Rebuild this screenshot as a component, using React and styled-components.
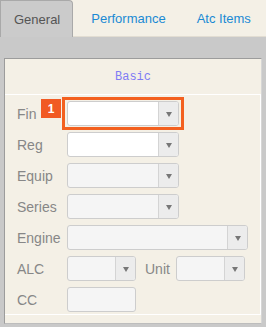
import React from 'react';
import styled, { createGlobalStyle } from 'styled-components';

const GlobalStyle = createGlobalStyle`
  html, body {
    margin: 0;
    padding: 0;
    background: #c9c9c9;
    font-family: 'Liberation Sans', Arial, sans-serif;
  }
`;

const TabBar = styled.div`
  display: flex;
  align-items: flex-end;
  height: 37px;
  background: #f4f0e6;
  box-sizing: border-box;
  border-bottom: 1px solid #e2ddd2;
`;

const Tab = styled.div`
  flex-shrink: 0;
  white-space: nowrap;
  box-sizing: border-box;
  padding: 0 12px 0 13px;
  margin-right: 4px;
  display: flex;
  align-items: center;
  font-size: 13px;
  color: ${(p) => (p.active ? '#555' : '#1a8ad4')};
  background: ${(p) => (p.active ? '#cbcbcb' : 'transparent')};
  border: 1px solid ${(p) => (p.active ? '#a9a9a9' : 'transparent')};
  border-bottom: none;
  border-radius: 0 4px 0 0;
  margin-bottom: ${(p) => (p.active ? '-1px' : '0')};
  height: ${(p) => (p.active ? '37px' : '36px')};
`;

const Content = styled.div`
  padding: 21px 4px 3px 4px;
`;

const Panel = styled.div`
  background: #f4f0e6;
  border: 1px solid;
  border-color: #9c9c9c #d6d6d6 #bdbdbd #9c9c9c;
  padding-bottom: 8px;
`;

const Legend = styled.div`
  height: 35px;
  display: flex;
  align-items: center;
  justify-content: center;
  font-family: 'Liberation Mono', 'Courier New', monospace;
  font-size: 12px;
  color: #7f7cf5;
`;

const Body = styled.div`
  border-top: 1px solid #fff;
  border-right: 1px solid #fff;
  border-bottom: 1px solid #fff;
  padding: 6px 0 2px 12px;
  display: flex;
  flex-direction: column;
  gap: 6px;
`;

const Row = styled.div`
  position: relative;
  display: flex;
  align-items: center;
  height: 25px;
`;

const Label = styled.span`
  width: ${(p) => p.width || 50}px;
  flex-shrink: 0;
  font-size: 14px;
  color: #878787;
  margin-left: ${(p) => p.gap || 0}px;
`;

const Select = styled.div`
  position: relative;
  display: flex;
  width: ${(p) => p.width}px;
  height: 25px;
  box-sizing: border-box;
  border: 1px solid #cdcdcd;
  border-radius: 3px;
  background: ${(p) => (p.disabled ? '#f5f5f5' : '#fff')};
`;

const Highlight = styled.div`
  position: absolute;
  left: -6px;
  top: -5px;
  right: -6px;
  bottom: -5px;
  border: 3px solid #f3601f;
  pointer-events: none;
`;

const Field = styled.div`
  flex: 1;
`;

const Arrow = styled.div`
  width: 19px;
  border-left: 1px solid #d4d4d4;
  background: #ececec;
  border-radius: 0 2px 2px 0;
  display: flex;
  align-items: center;
  justify-content: center;
  &::after {
    content: '';
    border-left: 3.5px solid transparent;
    border-right: 3.5px solid transparent;
    border-top: 5px solid #777;
    margin-top: 2px;
  }
`;

const Badge = styled.div`
  position: absolute;
  left: 24px;
  top: -2px;
  width: 20px;
  height: 19px;
  background: #f15a24;
  color: #fff;
  font-weight: bold;
  font-size: 12px;
  display: flex;
  align-items: center;
  justify-content: center;
`;

const Dropdown = ({ width, disabled, highlight }) => (
  <Select width={width} disabled={disabled}>
    <Field />
    <Arrow />
    {highlight && <Highlight />}
  </Select>
);

export default function App() {
  return (
    <>
      <GlobalStyle />
      <TabBar>
        <Tab active>General</Tab>
        <Tab>Performance</Tab>
        <Tab>Atc Items</Tab>
      </TabBar>
      <Content>
        <Panel>
          <Legend>Basic</Legend>
          <Body>
            <Row>
              <Label>Fin</Label>
              <Badge>1</Badge>
              <Dropdown width={112} highlight />
            </Row>
            <Row>
              <Label>Reg</Label>
              <Dropdown width={112} />
            </Row>
            <Row>
              <Label>Equip</Label>
              <Dropdown width={112} disabled />
            </Row>
            <Row>
              <Label>Series</Label>
              <Dropdown width={112} disabled />
            </Row>
            <Row>
              <Label>Engine</Label>
              <Dropdown width={181} disabled />
            </Row>
            <Row>
              <Label>ALC</Label>
              <Dropdown width={69} disabled />
              <Label width={31} gap={9}>Unit</Label>
              <Dropdown width={69} disabled />
            </Row>
            <Row>
              <Label>CC</Label>
              <Select width={69} disabled />
            </Row>
          </Body>
        </Panel>
      </Content>
    </>
  );
}
